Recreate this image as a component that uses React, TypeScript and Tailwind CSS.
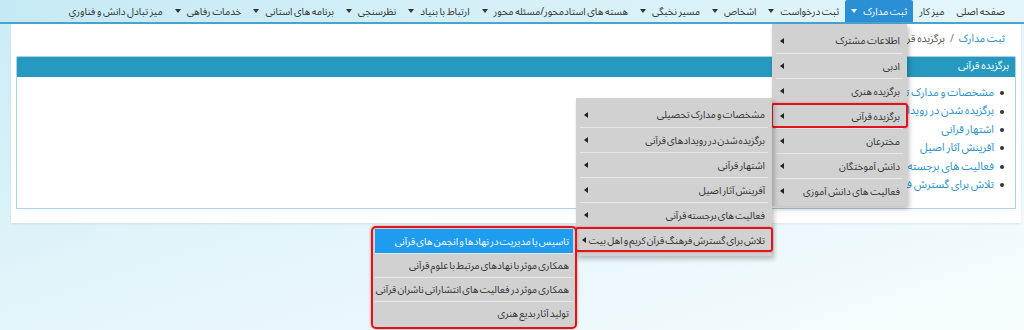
import React from "react";

const nav = [
  { label: "صفحه اصلی" },
  { label: "میز کار" },
  { label: "ثبت مدارک", caret: true, active: true },
  { label: "ثبت درخواست", caret: true },
  { label: "اشخاص", caret: true },
  { label: "مسیر نخبگی", caret: true },
  { label: "هسته های استادمحور/مسئله محور", caret: true },
  { label: "ارتباط با بنیاد", caret: true },
  { label: "نظرسنجی", caret: true },
  { label: "برنامه های استانی", caret: true },
  { label: "خدمات رفاهی", caret: true },
  { label: "میز تبادل دانش و فناوري" },
];

const links = [
  "مشخصات و مدارک تحصیلی",
  "برگزیده شدن در رویدادهای قرآنی",
  "اشتهار قرآنی",
  "آفرینش آثار اصیل",
  "فعالیت های برجسته قرآنی",
  "تلاش برای گسترش فرهنگ قرآن کریم و اهل بیت",
];

const menu1 = [
  "اطلاعات مشترک",
  "ادبی",
  "برگزیده هنری",
  "برگزیده قرآنی",
  "مخترعان",
  "دانش آموختگان",
  "فعالیت های دانش آموزی",
];

const menu3 = [
  "تاسیس یا مدیریت در نهادها و انجمن های قرآنی",
  "همکاری موثر با نهادهای مرتبط با علوم قرآنی",
  "همکاری موثر در فعالیت های انتشاراتی ناشران قرآنی",
  "تولید آثار بدیع هنری",
];

function Caret({ white }: { white?: boolean }) {
  return (
    <span
      className={
        "inline-block w-0 h-0 border-x-[3px] border-x-transparent border-t-[4px] " +
        (white ? "border-t-white" : "border-t-[#333]")
      }
    />
  );
}

function Arrow() {
  return (
    <span className="shrink-0 inline-block w-0 h-0 border-y-[3px] border-y-transparent border-r-[4px] border-r-[#222]" />
  );
}

function RedBox() {
  return (
    <span className="absolute -inset-x-[1px] inset-y-0 border-2 border-[#e0141c] rounded-[3px] shadow-[0_0_2px_rgba(224,20,28,0.5)] pointer-events-none" />
  );
}

function MenuItem({ label, first, marked }: { label: string; first?: boolean; marked?: boolean }) {
  return (
    <div className="relative px-[4px]">
      <div
        className={
          "h-[25px] flex items-center justify-between gap-[3px] pr-[3px] pl-[4px] " +
          (first ? "" : "border-t border-[#e6e6e6]")
        }
      >
        <span className="whitespace-nowrap">{label}</span>
        <Arrow />
      </div>
      {marked && <RedBox />}
    </div>
  );
}

export default function App() {
  return (
    <div
      dir="rtl"
      className="relative w-[1024px] h-[330px] overflow-hidden bg-gradient-to-br from-[#c9ecf6] via-[#e4f5fa] to-[#f6fcfe] font-['Noto_Sans_Arabic','DejaVu_Sans',sans-serif] text-[10px] [word-spacing:-1px] text-[#333]"
    >
      {/* top nav */}
      <div className="h-[24px] flex items-stretch pr-[13px] bg-gradient-to-l from-[#e4f6fb] to-[#c6eaf5] border-b-2 border-[#4aa3cf]">
        {nav.map((n) => (
          <div
            key={n.label}
            className={
              "flex items-center gap-[6px] px-[6px] whitespace-nowrap " +
              (n.active ? "bg-[#2b8fd6] text-white rounded-t-[2px]" : "")
            }
          >
            <span>{n.label}</span>
            {n.caret && <Caret white={n.active} />}
          </div>
        ))}
      </div>

      {/* page content */}
      <div className="mx-[3px] w-[1010px] bg-white pb-[14px] shadow-[0_1px_2px_rgba(0,0,0,0.08)]">
        <div className="h-[32px] flex items-center gap-[5px] pr-[16px] text-[10.5px]">
          <span className="text-[#2b8fc8]">ثبت مدارک</span>
          <span className="text-[#777]">/</span>
          <span className="text-[#555]">برگزیده قرآنی</span>
        </div>
        <div className="mx-[5px] border border-[#a9d2e6] rounded-t-[2px]">
          <div className="h-[20px] bg-[#2699c0] text-white flex items-center pr-[6px] text-[10.5px]">برگزیده قرآنی</div>
          <ul className="h-[131px] pt-[7px] pr-[11px] text-[11px]">
            {links.map((l) => (
              <li key={l} className="h-[18.4px] flex items-center gap-[6px]">
                <span className="w-[4px] h-[4px] rounded-full bg-[#333]" />
                <span className="text-[#2c93cc]">{l}</span>
              </li>
            ))}
          </ul>
        </div>
      </div>

      {/* dropdown: ثبت مدارک */}
      <div className="absolute left-[772px] top-[24px] w-[135px] bg-[#d1d1d1] pt-[4px] pb-[3px] shadow-[2px_3px_5px_rgba(0,0,0,0.25)]">
        {menu1.map((m, i) => (
          <MenuItem key={m} label={m} first={i === 0} marked={i === 3} />
        ))}
      </div>

      {/* submenu: برگزیده قرآنی */}
      <div className="absolute left-[576px] top-[98px] w-[196px] bg-[#d1d1d1] pt-[4px] pb-[4px] [word-spacing:-1.5px] shadow-[2px_3px_5px_rgba(0,0,0,0.25)]">
        {links.map((m, i) => (
          <MenuItem key={m} label={m} first={i === 0} marked={i === links.length - 1} />
        ))}
      </div>

      {/* submenu: تلاش برای گسترش ... */}
      <div className="absolute left-[371px] top-[226px] w-[206px] h-[103px] bg-[#d1d1d1] border-2 border-[#e0141c] rounded-[5px] shadow-[0_0_3px_rgba(224,20,28,0.5)] px-[2px] pt-[1px] [word-spacing:-1.5px]">
        {menu3.map((m, i) => (
          <div
            key={m}
            className={
              "h-[24px] flex items-center pr-[4px] whitespace-nowrap " +
              (i === 0 ? "bg-[#1e9cf0] text-white" : "border-t border-[#e6e6e6] text-[#333]")
            }
          >
            {m}
          </div>
        ))}
      </div>
    </div>
  );
}
